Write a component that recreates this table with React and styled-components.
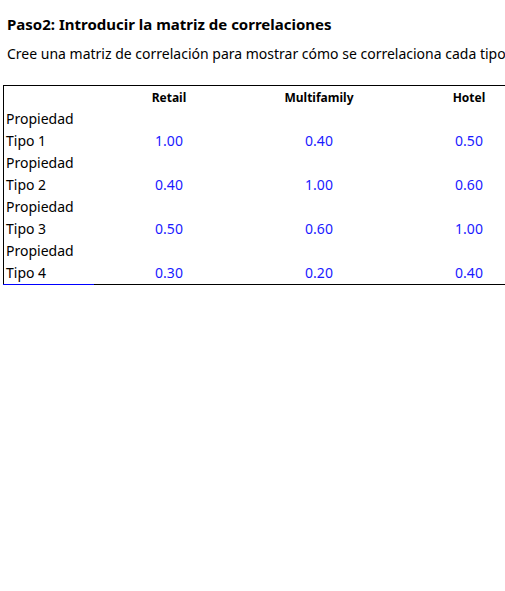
import React from 'react';
import styled, { createGlobalStyle } from 'styled-components';

const GlobalStyle = createGlobalStyle`
  body {
    margin: 0;
    background: #ffffff;
    font-family: "Noto Sans", "Open Sans", sans-serif;
    color: #000000;
    overflow: hidden;
  }
`;

const Page = styled.div`
  width: 505px;
  height: 591px;
  padding: 14px 0 0 3px;
  box-sizing: border-box;
  overflow: hidden;
`;

const Title = styled.h2`
  margin: 0 0 0 4px;
  font-size: 15px;
  font-weight: bold;
  line-height: 21px;
`;

const Intro = styled.p`
  margin: 9px 0 0 4px;
  font-size: 14px;
  line-height: 20px;
  white-space: nowrap;
`;

const Matrix = styled.table`
  margin-top: 21px;
  border-collapse: collapse;
  border: 1px solid #000000;
  table-layout: fixed;
  width: 541px;
  font-size: 14px;
`;

const HeadCell = styled.th`
  width: ${(p) => p.$w}px;
  height: 22px;
  padding: 0;
  font-size: 12px;
  font-weight: bold;
  text-align: center;
  vertical-align: middle;
`;

const LabelCell = styled.td`
  padding: 0 0 0 2px;
  line-height: 22px;
  vertical-align: bottom;
  border-bottom: ${(p) => (p.$last ? '1px solid #0000ff' : 'none')};
`;

const ValueCell = styled.td`
  padding: 0;
  line-height: 22px;
  text-align: center;
  vertical-align: bottom;
  color: #1a1aff;
`;

const cols = ['Retail', 'Multifamily', 'Hotel'];
const rows = [
  ['Tipo 1', ['1.00', '0.40', '0.50']],
  ['Tipo 2', ['0.40', '1.00', '0.60']],
  ['Tipo 3', ['0.50', '0.60', '1.00']],
  ['Tipo 4', ['0.30', '0.20', '0.40']],
];

export default function App() {
  return (
    <Page>
      <GlobalStyle />
      <Title>Paso2: Introducir la matriz de correlaciones</Title>
      <Intro>Cree una matriz de correlación para mostrar cómo se correlaciona cada tipo de propiedad</Intro>
      <Matrix>
        <thead>
          <tr>
            <HeadCell $w={90} />
            {cols.map((c) => (
              <HeadCell key={c} $w={150}>{c}</HeadCell>
            ))}
          </tr>
        </thead>
        <tbody>
          {rows.map(([name, vals], i) => (
            <tr key={name}>
              <LabelCell $last={i === rows.length - 1}>Propiedad {name}</LabelCell>
              {vals.map((v, j) => (
                <ValueCell key={j}>{v}</ValueCell>
              ))}
            </tr>
          ))}
        </tbody>
      </Matrix>
    </Page>
  );
}
